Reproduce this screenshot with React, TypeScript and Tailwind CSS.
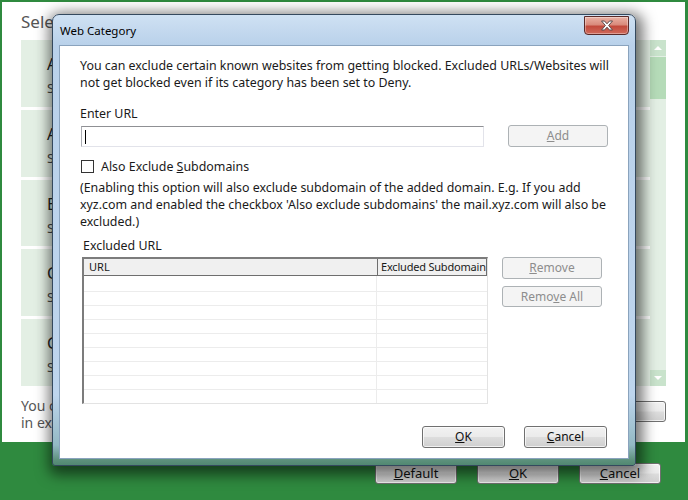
import React from "react";

const font = { fontFamily: '"Noto Sans", "Open Sans", sans-serif' };

function WinButton({
  children,
  className = "",
  disabled = false,
}: {
  children: React.ReactNode;
  className?: string;
  disabled?: boolean;
}) {
  if (disabled) {
    return (
      <div
        className={`flex items-center justify-center rounded-[3px] border border-[#adb2b5] bg-[#f4f4f4] text-[12px] text-[#8d8d8d] ${className}`}
      >
        {children}
      </div>
    );
  }
  return (
    <div
      className={`flex items-center justify-center rounded-[3px] border border-[#707070] bg-[linear-gradient(180deg,#f2f2f2_0%,#ebebeb_48%,#dddddd_52%,#cfcfcf_100%)] text-[12px] text-[#111] shadow-[inset_0_0_0_1px_rgba(255,255,255,0.7)] ${className}`}
    >
      {children}
    </div>
  );
}

const items = [
  ["Adult / Sexually Explicit", "Set to: Deny"],
  ["Advertisements & Pop-Ups", "Set to: Allow"],
  ["Blogs / Personal Pages", "Set to: Allow"],
  ["Chat / Instant Messaging", "Set to: Allow"],
  ["Gambling", "Set to: Deny"],
];

export default function App() {
  return (
    <div
      className="relative h-[500px] w-[688px] overflow-hidden bg-[#2f8a3f]"
      style={font}
    >
      {/* Background page */}
      <div className="ml-[2px] mt-[2px] flex h-[440px] w-[683px] flex-col bg-white pl-[19px] pr-[19px]">
        <div className="pt-[9px] text-[17px] leading-[22px] text-[#555]">
          Select the websites to block for below categories of website
        </div>
        <div className="mt-[7px] flex h-[346px]">
          <div className="flex flex-1 flex-col gap-[3px]">
            {items.map(([t, s]) => (
              <div
                key={t}
                className="flex h-[67px] flex-col bg-[#e3efe4] pl-[26px] pt-[14px]"
              >
                <div className="text-[16px] leading-[20px] text-[#222]">{t}</div>
                <div className="mt-[6px] text-[13px] leading-[16px] text-[#444]">{s}</div>
              </div>
            ))}
          </div>
          <div className="flex w-[16px] flex-col bg-[#e3efe4]">
            <div className="flex h-[16px] items-center justify-center bg-[#c9e3cc]">
              <div className="h-0 w-0 border-x-[4px] border-b-[4px] border-x-transparent border-b-white" />
            </div>
            <div className="mt-[1px] h-[42px] bg-[#b5dbb8]" />
            <div className="flex-1" />
            <div className="flex h-[16px] items-center justify-center bg-[#c9e3cc]">
              <div className="h-0 w-0 border-x-[4px] border-t-[4px] border-x-transparent border-t-white" />
            </div>
          </div>
        </div>
        <div className="mt-[11px] flex items-start justify-between">
          <div className="text-[14px] leading-[17px] text-[#555]">
            <div>You can exclude certain known websites from getting blocked</div>
            <div>in excluded list</div>
          </div>
          <WinButton className="mt-[4px] h-[21px] w-[120px]">Exclude</WinButton>
        </div>
      </div>
      <div className="mt-[21px] flex justify-end gap-[20px] pr-[27px]">
        <WinButton className="h-[21px] w-[82px] text-[13px]">
          <span>
            <u>D</u>efault
          </span>
        </WinButton>
        <WinButton className="h-[21px] w-[82px] text-[13px]">
          <span>
            <u>O</u>K
          </span>
        </WinButton>
        <WinButton className="h-[21px] w-[82px] text-[13px]">
          <span>
            <u>C</u>ancel
          </span>
        </WinButton>
      </div>

      {/* Dialog window */}
      <div className="absolute left-[52px] top-[14px] flex h-[452px] w-[584px] flex-col rounded-t-[7px] rounded-b-[3px] border border-[#34495e] bg-[linear-gradient(180deg,#cfe1f3_0px,#b9d1ea_30px,#bed5ed_380px,#93b9c4_430px,#5d917c_445px,#4c846d_452px)] shadow-[2px_4px_14px_5px_rgba(0,0,0,0.55)]">
        <div className="relative flex h-[30px] items-center pl-[7px]">
          <span className="pt-[1px] text-[11.5px] text-[#000]">Web Category</span>
          <div className="absolute right-[6px] top-[1px] flex h-[19px] w-[45px] items-center justify-center rounded-b-[4px] border border-[#5a2a28] bg-[linear-gradient(180deg,#eab1a4_0%,#d98b7c_45%,#c24a3c_55%,#d06a5a_100%)] shadow-[inset_0_0_0_1px_rgba(255,255,255,0.35)]">
            <svg width="14" height="11" viewBox="0 0 14 11">
              <path
                d="M1.5 1 L4.5 1 L7 3.8 L9.5 1 L12.5 1 L8.6 5.5 L12.5 10 L9.5 10 L7 7.2 L4.5 10 L1.5 10 L5.4 5.5 Z"
                fill="#ffffff"
                stroke="#5b4b4b"
                strokeWidth="1"
                strokeLinejoin="round"
              />
            </svg>
          </div>
        </div>
        <div className="mx-[6px] flex h-[414px] flex-col border border-[#8aa3bd] bg-white px-[20px] pt-[11px] text-[12.4px] text-[#1a1a1a]">
          <div className="whitespace-nowrap leading-[17px]">
            You can exclude certain known websites from getting blocked. Excluded URLs/Websites will
            <br />
            not get blocked even if its category has been set to Deny.
          </div>
          <div className="mt-[14px] leading-[17px]">Enter URL</div>
          <div className="mt-[3px] flex items-start">
            <div className="ml-[1px] mt-[1px] flex h-[21px] w-[403px] items-center border border-[#e2e3ea] border-l-[#abadb3] border-t-[#8f9094] pl-[3px]">
              <div className="h-[14px] w-[1px] bg-black" />
            </div>
            <WinButton disabled className="ml-[24px] h-[22px] w-[100px]">
              <span>
                <u>A</u>dd
              </span>
            </WinButton>
          </div>
          <div className="mt-[11px] flex h-[17px] items-center">
            <div className="ml-[1px] h-[13px] w-[13px] border border-[#333]" />
            <span className="ml-[7px] leading-[17px]">
              Also Exclude <u>S</u>ubdomains
            </span>
          </div>
          <div className="mt-[4px] whitespace-nowrap leading-[17px]">
            (Enabling this option will also exclude subdomain of the added domain. E.g. If you add
            <br />
            xyz.com and enabled the checkbox 'Also exclude subdomains' the mail.xyz.com will also be
            <br />
            excluded.)
          </div>
          <div className="mt-[7px] pl-[3px] leading-[17px]">Excluded URL</div>
          <div className="mt-[3px] flex items-start">
            <div className="ml-[2px] flex h-[147px] w-[406px] flex-col border-b border-l-[2px] border-r border-t-[2px] border-b-[#e3e3e3] border-l-[#7c7c7c] border-r-[#e3e3e3] border-t-[#7c7c7c]">
              <div className="flex h-[17px] border-b border-[#6e6e6e] bg-[#f0f0f0] text-[11px] leading-[16px]">
                <div className="w-[293px] pl-[5px]">URL</div>
                <div className="flex-1 overflow-hidden whitespace-nowrap border-x border-x-[#6e6e6e] pl-[3px] tracking-[-0.2px]">
                  Excluded Subdomain
                </div>
              </div>
              {[15, 13, 13, 13, 13, 13, 13, 13].map((h, i) => (
                <div key={i} className="flex border-b border-[#ececec]" style={{ height: h + 1 }}>
                  <div className="w-[293px] border-r border-[#ececec]" />
                  <div className="flex-1" />
                </div>
              ))}
              <div className="flex flex-1">
                <div className="w-[293px] border-r border-[#ececec]" />
              </div>
            </div>
            <div className="ml-[14px] flex flex-col">
              <WinButton disabled className="h-[22px] w-[100px]">
                <span>
                  <u>R</u>emove
                </span>
              </WinButton>
              <WinButton disabled className="mt-[7px] h-[21px] w-[100px]">
                <span>
                  Remo<u>v</u>e All
                </span>
              </WinButton>
            </div>
          </div>
          <div className="mr-[1px] mt-[22px] flex justify-end gap-[19px]">
            <WinButton className="h-[22px] w-[83px]">
              <span>
                <u>O</u>K
              </span>
            </WinButton>
            <WinButton className="h-[22px] w-[83px]">
              <span>
                <u>C</u>ancel
              </span>
            </WinButton>
          </div>
        </div>
      </div>
    </div>
  );
}
